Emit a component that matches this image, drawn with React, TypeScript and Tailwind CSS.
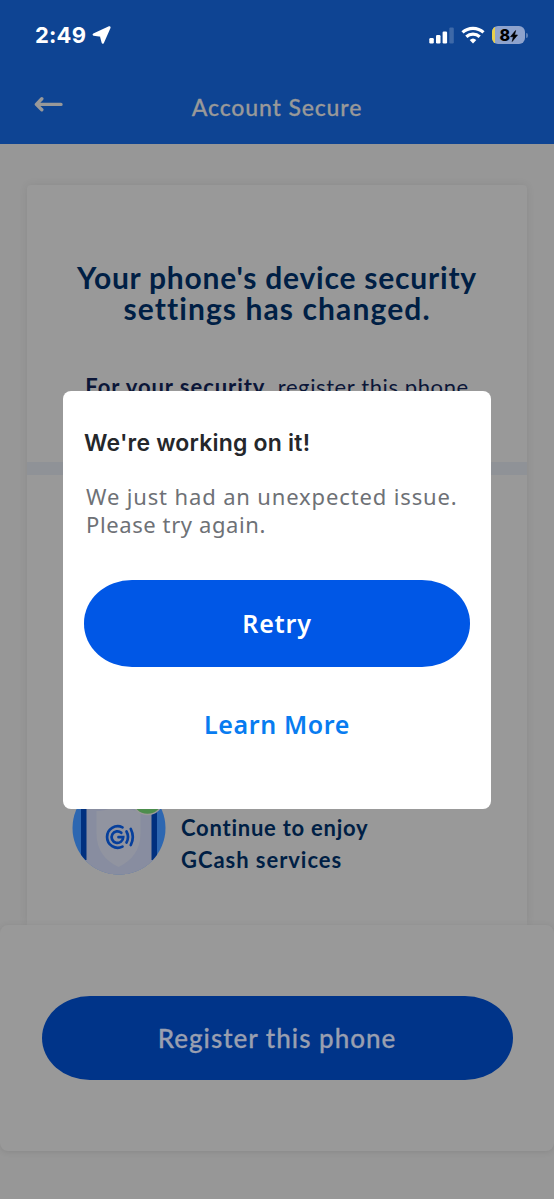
function StatusBar() {
  return (
    <div className="flex h-[70px] items-center pl-[35px] pr-[26px] text-white">
      <span className="font-['Inter'] text-[22px] font-bold leading-none tracking-[0.2px]">2:49</span>
      <svg className="ml-[6px] h-5 w-5" viewBox="0 0 20 20" fill="currentColor" stroke="currentColor" strokeWidth="2.4" strokeLinejoin="round">
        <path d="M17.400 2.400 1.800 9.600l7.200 1 1.800 6.900Z" />
      </svg>
      <div className="ml-auto flex items-center">
        <svg className="h-[17px] w-[25px]" viewBox="0 0 25 17" fill="currentColor">
          <rect x="0.3" y="11" width="4.5" height="5.5" rx="1.2" />
          <rect x="7" y="8" width="4.5" height="8.5" rx="1.2" />
          <rect x="13.6" y="4.5" width="4.5" height="12" rx="1.2" />
          <rect x="20.3" y="0.5" width="4.5" height="16" rx="1.2" opacity="0.2" />
        </svg>
        <svg className="ml-[7px] h-[18px] w-6" viewBox="0 0 24 18" fill="none" stroke="currentColor" strokeWidth="3.2">
          <path d="M1.5 6.4a15.500 15.500 0 0 1 21 0" />
          <path d="M5.3 10.7a10 10 0 0 1 13.400 0" />
          <path d="M12 17.4 8.7 14a4.800 4.800 0 0 1 6.600 0Z" fill="currentColor" stroke="none" />
        </svg>
        <div className="ml-[7px] flex h-[18px] w-[33px] overflow-hidden rounded-[6px] bg-[#8ea3cd] text-black">
          <span className="h-full w-[2.5px] bg-[#e8d04c]" />
          <span className="ml-[5px] font-['Inter'] text-[16px] font-extrabold leading-[18px]">8</span>
          <svg className="mt-[3.5px] h-3 w-2" viewBox="0 0 8 12" fill="currentColor" stroke="currentColor" strokeWidth="0.6">
            <path d="M5.6.5.5 6.700h2.800L2.200 11.500 7.500 5H4.600Z" />
          </svg>
        </div>
        <span className="ml-px h-[5px] w-[2px] rounded-r-full bg-[#5b7fb8]" />
      </div>
    </div>
  );
}

function ShieldArt() {
  return (
    <svg className="h-[94px] w-[94px] shrink-0" viewBox="0 0 94 94" fill="none">
      <defs>
        <clipPath id="disc">
          <circle cx="47" cy="47" r="46.5" />
        </clipPath>
      </defs>
      <g clipPath="url(#disc)">
        <rect width="94" height="94" fill="#2d67b1" />
        <rect x="9" width="76" height="79" fill="#00307f" />
        <rect x="14.5" width="65" height="94" fill="#888da0" />
        <path d="M0 79h94v15H0z" fill="#888da0" />
        <path d="M46.500 22c8 6 15 8 22 8v23c0 16-9 27-22 33-13-6-22-17-22-33V30c8 0 15-2 22-8Z" fill="#9194a0" />
      </g>
      <circle cx="75.5" cy="18" r="15.5" fill="#4d8d4d" stroke="#999" strokeWidth="1.5" />
      <g stroke="#063f9c" strokeWidth="2.7" strokeLinecap="round">
        <path d="M50.5 46.400A10.700 10.700 0 1 0 50.500 65.600" />
        <path d="M49.300 51.800A5.800 5.800 0 1 0 51.200 56.200H46.500" />
        <path d="M54.500 50.500q3 5.500 0 11" />
        <path d="M58.8 48q4 8 0 16" />
      </g>
    </svg>
  );
}

function ErrorDialog() {
  return (
    <div className="absolute left-[63px] top-[391px] flex h-[418px] w-[428px] flex-col rounded-[8px] bg-white px-[21px] pt-[36px]">
      <h2 className="whitespace-nowrap font-['Inter'] text-[23px] font-semibold leading-8 tracking-[0.2px] text-[#25272b]">
        We're working on it!
      </h2>
      <p className="ml-[2px] mt-[23px] whitespace-nowrap font-['Noto_Sans'] text-[22px] leading-7 text-[#6e7176]">
        <span className="block tracking-[0.86px]">We just had an unexpected issue.</span>
        <span className="block tracking-[0.6px]">Please try again.</span>
      </p>
      <button className="mt-[42px] h-[87px] w-[386px] shrink-0 rounded-[48px/43px] bg-[#0057e6] font-['Noto_Sans'] text-[25px] font-semibold tracking-[0.8px] text-white">
        Retry
      </button>
      <button className="mt-[37px] font-['Noto_Sans'] text-[25px] font-semibold leading-10 tracking-[0.6px] text-[#087cf0]">
        Learn More
      </button>
    </div>
  );
}

export default function App() {
  return (
    <div className="relative flex h-[1199px] w-[554px] flex-col overflow-hidden bg-[#979797] font-['Lato',sans-serif]">
      <header className="h-[143.5px] shrink-0 bg-[#0e4493]">
        <StatusBar />
        <div className="relative flex h-[75px] items-center justify-center text-[#999]">
          <svg
            className="absolute left-[34px] top-[26px] h-4 w-[30px]"
            viewBox="0 0 30 16"
            fill="none"
            stroke="currentColor"
            strokeWidth="3.4"
            strokeLinecap="round"
            strokeLinejoin="round"
          >
            <path d="M7.800 2.800 2.400 8.400l5.400 5.400M2.400 8.400h24.600" />
          </svg>
          <h1 className="text-[23px] font-medium tracking-[0.85px] [-webkit-text-stroke:0.3px]">Account Secure</h1>
        </div>
      </header>

      <main className="mx-[27px] mt-[41.5px] flex h-[740px] shrink-0 flex-col rounded-t-[4px] bg-[#999] shadow-[0_0_8px_rgba(0,0,0,0.08)]">
        <h2 className="mt-[77px] whitespace-nowrap text-center text-[30px] font-bold leading-[31px] text-[#001f45]">
          <span className="block tracking-[0.78px]">Your phone's device security</span>
          <span className="block tracking-[1.1px]">settings has changed.</span>
        </h2>
        <p className="mt-[47px] flex justify-center whitespace-nowrap text-[22px] leading-8 text-[#0b1638]">
          <b className="tracking-[0.95px]">For your security,</b>
          <span className="ml-[7px] tracking-[0.6px]">register this phone</span>
        </p>
        <div className="mt-[59px] h-[13px] bg-[#8f9297]" />
        <div className="ml-[45px] mt-[306px] flex">
          <ShieldArt />
          <p className="ml-[15px] mt-[31px] whitespace-nowrap text-[22px] font-bold leading-8 text-[#001f45]">
            <span className="block tracking-[0.75px]">Continue to enjoy</span>
            <span className="block tracking-[0.95px]">GCash services</span>
          </p>
        </div>
      </main>

      <footer className="z-10 flex h-[226px] shrink-0 items-center justify-center rounded-[8px] bg-[#999] shadow-[0_1px_6px_rgba(0,0,0,0.1)]">
        <button className="h-[84px] w-[471px] rounded-[48px/42px] bg-[#003489] text-[26px] font-medium tracking-[1px] text-[#999fb0] [-webkit-text-stroke:0.3px]">
          Register this phone
        </button>
      </footer>

      <div className="absolute inset-0 z-20">
        <ErrorDialog />
      </div>
    </div>
  );
}
